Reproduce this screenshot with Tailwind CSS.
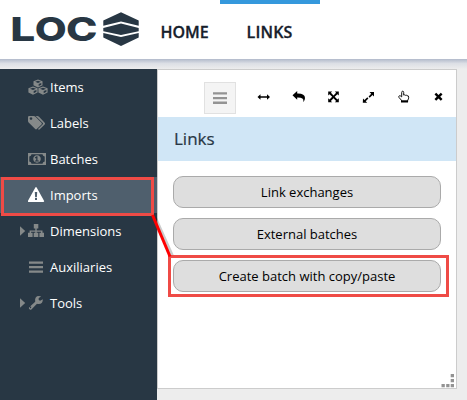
<!DOCTYPE html>
<html lang="en">
<head>
<meta charset="utf-8">
<title>LOC</title>
<script src="https://cdn.jsdelivr.net/npm/@tailwindcss/browser@4"></script>
</head>
<body class="relative flex h-[400px] w-[467px] flex-col overflow-hidden bg-[#ededed] font-['Open_Sans','Noto_Sans',sans-serif]">
<header class="flex h-[59px] shrink-0 bg-white pl-1">
  <svg class="h-[59px] w-[136px] shrink-0" viewBox="4 0 136 59" fill="#283744">
    <g font-family="Inter, sans-serif" font-weight="800" font-size="33">
      <text x="10.200" y="41" textLength="25" lengthAdjust="spacingAndGlyphs">L</text>
      <text x="34.700" y="41" textLength="32" lengthAdjust="spacingAndGlyphs">O</text>
      <text x="66" y="41" textLength="31.500" lengthAdjust="spacingAndGlyphs">C</text>
    </g>
    <path d="M121 12.200 138.700 20.500v5.300L121 21.500l-17.700 4.300v-5.300zM103.300 28 121 23.500l17.700 4.500v3.200L121 35l-17.700-3.800zM103.300 33 121 37l17.700-4v4.500L121 46l-17.700-8.500z"/>
  </svg>
  <nav class="flex pl-5 text-base leading-[22px] font-semibold text-[#16202b]">
    <a class="w-[60px] pt-[21px] pl-[0.5px] [-webkit-text-stroke:0.3px_#16202b]">HOME</a>
    <a class="w-[100px] border-t-4 border-[#3598dc] pt-[17px] pl-[26.5px] tracking-[0.2px] [-webkit-text-stroke:0.3px_#16202b]">LINKS</a>
  </nav>
</header>
<div class="h-[10px] shrink-0 bg-linear-to-b from-[#b2bacb] via-[#dcdfe5] via-45% to-[#ededed]"></div>
<div class="flex min-h-0 flex-1">
  <aside class="w-[157px] shrink-0 bg-[#283744] text-[13px] leading-9 text-white">
    <div class="flex h-9 pl-7"><svg class="mr-0.5 h-9 w-5 shrink-0" viewBox="0 0 20 36" fill="#858989"><path fill-rule="evenodd" d="m10 10.500 4.500 1.800v4L10 18.500l-4.500-2.200v-4zm0 1.200-2.800 1.100 2.800 1.200 2.800-1.200zm.7 3.300v2l2.600-1.300v-1.800zM5 17.400l4.600 1.800v4.200L5 25.700.4 23.400v-4.200zm0 1.300-3 1.100 3 1.300 3-1.300zm.7 3.400v2.100l2.700-1.400v-1.900zM15 17.400l4.600 1.800v4.200L15 25.700l-4.600-2.300v-4.200zm0 1.300-3 1.100 3 1.300 3-1.300zm.7 3.400v2.100l2.700-1.400v-1.900z"/></svg>Items</div>
    <div class="flex h-9 pl-7"><svg class="mr-0.5 h-9 w-5 shrink-0" viewBox="0 0 20 36" fill="#858989"><path fill-rule="evenodd" d="M0 12.200q0-1.200 1.200-1.200h4.300q1.200 0 2 .8l6 6q.8.800 0 1.600l-4.700 4.700q-.8.800-1.600 0l-6.300-6.300Q0 17 0 15.700zm3 0a1.300 1.300 0 1 0 .01 0z"/><path d="M7.700 11h1.500q1 0 1.800.8l5.700 6q.8.800 0 1.600L12 24.100q-1.200 1.200-2-.1l4.800-4.800q.6-.6 0-1.200z"/></svg>Labels</div>
    <div class="flex h-9 pl-7"><svg class="mr-0.5 h-9 w-5 shrink-0" viewBox="0 0 20 36" fill="#858989"><path fill-rule="evenodd" d="M0 12h18v12H0zm3.500 1.300Q3.300 15.200 1.300 15.500v5q2 .2 2.200 2.200h11q.2-2 2.200-2.200v-5q-2-.3-2.200-2.200z"/><path fill-rule="evenodd" d="M9 14.300c5 0 5 7.400 0 7.400s-5-7.400 0-7.400zm-.5 1-1.700 1.300.6.800.8-.5v2.700H7v1h3.800v-1H9.500v-4.300z"/></svg>Batches</div>
    <div class="flex h-9 bg-[#4f5f6d] pl-7"><svg class="mr-0.5 h-9 w-5 shrink-0" viewBox="0 0 20 36" fill="#fff"><path fill-rule="evenodd" d="M7.200 10.700q.8-1.400 1.600 0l7.200 13q.6 1.300-.8 1.300H.8q-1.400 0-.8-1.300zM6.800 15l.3 5.200h1.800l.3-5.200zm.2 6.100v2h2v-2z"/></svg>Imports</div>
    <div class="flex h-9 pl-5"><svg class="h-9 w-2 shrink-0" viewBox="0 0 8 36" fill="#858989"><path d="M0 13.200 5.200 18 0 22.800z"/></svg><svg class="mr-0.5 h-9 w-5 shrink-0" viewBox="0 0 20 36" fill="#858989"><path d="M5.800 11h4.500v4.500H8.700v2h5.800v2.300H16V24h-4.600v-4.200h1.600v-1.100H8.700v1.100h1.600V24H5.700v-4.200h1.600v-1.100H3v1.100h1.600V24H0v-4.200h1.600v-2.300h5.700v-2H5.800z"/></svg>Dimensions</div>
    <div class="flex h-9 pl-7"><svg class="mr-0.5 h-9 w-5 shrink-0" viewBox="0 0 20 36" fill="#858989"><path d="M1 12.500h14v2.200H1zM1 17h14v2.200H1zm0 4.600h14v2.200H1z"/></svg>Auxiliaries</div>
    <div class="flex h-9 pl-5"><svg class="h-9 w-2 shrink-0" viewBox="0 0 8 36" fill="#858989"><path d="M0 13.200 5.200 18 0 22.800z"/></svg><svg class="mr-0.5 h-9 w-5 shrink-0" viewBox="0 0 20 36" fill="#858989"><path fill-rule="evenodd" d="M13.200 11.400 10.700 13v2l1.400.8 2.700-1.500q.4 4.700-4.200 4.700-1 0-1.600-.3l-5.600 5.800q-.8.700-1.600 0l-.7-.8q-.6-.7.100-1.400l6-5.600Q6.400 11 11 11q1.300 0 2.200.4zM2.500 21.600a.7.700 0 1 0 .01 0z"/></svg>Tools</div>
  </aside>
  <main class="h-80 w-[300px] border border-[#ccc] bg-white">
    <div class="flex h-[47px] items-end pb-[3px] pl-[46px]">
      <div class="h-8 w-8 shrink-0 border border-[#e1e1e1] bg-[#f4f4f4]"><svg class="size-[30px]" viewBox="0 0 30 30" fill="#939393"><path d="M8 9.300h14v2.300H8zM8 14h14v2.300H8zm0 4.600h14v2.300H8z"/></svg></div>
      <svg class="h-8 w-[210px]" viewBox="236 82 210 32" fill="#000">
        <path d="M257.500 97l3-2.800v2h6.500v-2l3 2.800-3 2.800v-2h-6.500v2z"/>
        <path d="m292.500 95.300 4.700-4.300v2.500q7.800-.2 7.800 4.500 0 1.800-1.300 3.800-.4.300-.3-.2.800-4.300-6.200-4.100v2.300z"/>
        <path d="M328.200 91.500h4l-1.300 1.300 2.600 2.700 2.600-2.700-1.300-1.300h4v4l-1.400-1.300-2.700 2.600 2.700 2.700 1.400-1.300v4h-4l1.300-1.300-2.600-2.700-2.600 2.700 1.300 1.300h-4v-4l1.300 1.300 2.700-2.700-2.700-2.600-1.300 1.300z"/>
        <path d="M369.500 92h4.500v4.500l-1.500-1.500-2.800 2.700-1.100-1.100 2.600-2.900zM363 98.500l1.500 1.500 2.800-2.700 1.100 1.100-2.700 2.800 1.500 1.500h-4.400z"/>
        <path fill="none" stroke="#111" d="M401.500 101.500v-1.200l-2.500-2.800q-.8-1.500.7-1.800.9 0 2 1.200v-4.400q0-1.300 1-1.300t1 1.300v2.600q1-.6 1.700.2 1-.5 1.600.4 1.700-.3 1.700 1.500 0 1.800-1 3.100v1.200z"/><path d="M401 100.300h7v2.200h-7z"/>
        <path d="m434.500 94.400 1.700-1.700 2.300 2.300 2.300-2.300 1.700 1.700-2.300 2.300 2.300 2.400-1.700 1.700-2.300-2.300-2.300 2.300-1.700-1.700 2.300-2.400z"/>
      </svg>
    </div>
    <h1 class="h-11 bg-[#d0e6f6] pl-4 text-[17px] leading-[44px] text-[#283744] [-webkit-text-stroke:0.2px_#283744]">Links</h1>
    <div class="flex flex-col gap-2.5 px-[15px] pt-[15px] text-[13px] text-black">
      <button class="h-8 rounded-[10px] border border-[#aaa] bg-[#dedede] pt-px">Link exchanges</button>
      <button class="h-8 rounded-[10px] border border-[#aaa] bg-[#dedede] pt-px">External batches</button>
      <button class="h-8 rounded-[10px] border border-[#aaa] bg-[#dedede] pt-px">Create batch with copy/paste</button>
    </div>
    <svg class="mt-[82px] ml-[283px] h-[14px] w-[14px]" viewBox="0 0 14 14" fill="#939393"><path d="M9.700 0H13v3.300H9.700zM9.700 5H13v3.300H9.700zM9.700 10H13v3.300H9.700zM5.200 10h3.300v3.300H5.200zM.5 10h3.300v3.300H.5z"/></svg>
  </main>
</div>
<svg class="absolute inset-0 h-[400px] w-[467px]" viewBox="0 0 467 400" fill="none">
  <path d="m155 218 17 38" stroke="#000" stroke-opacity=".2" stroke-width="4"/>
  <path d="M2.500 178.500h150v36H2.500zM169.500 256.500h278v39h-278z" stroke="#ef4b46" stroke-width="3"/>
  <path d="m152.500 215 17.500 41.500" stroke="#f00" stroke-width="3"/>
</svg>
</body>
</html>
